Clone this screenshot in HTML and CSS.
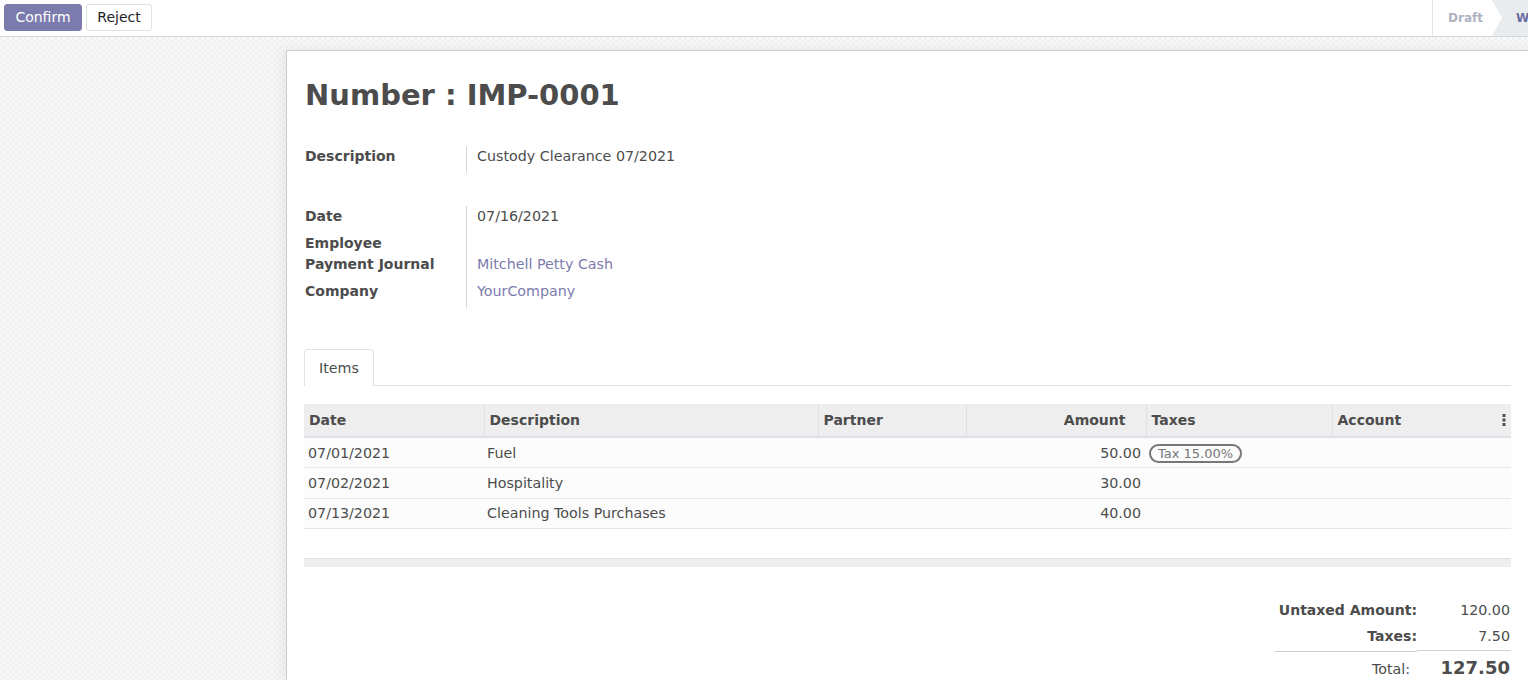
FILE: index.html
```html
<!DOCTYPE html>
<html>
<head>
<meta charset="utf-8">
<link rel="stylesheet" href="styles.css">
</head>
<body>
<div class="cp">
  <div class="cp-buttons">
    <button class="btn btn-primary">Confirm</button>
    <button class="btn btn-secondary">Reject</button>
  </div>
  <div class="statusbar">
    <div class="stage">Draft</div>
    <div class="stage stage-active">Waiting Approval</div>
  </div>
</div>
<div class="content">
  <div class="sheet">
    <h1 class="title">Number : IMP-0001</h1>

    <div class="group">
      <div class="field-row">
        <div class="label">Description</div>
        <div class="value">Custody Clearance 07/2021</div>
      </div>
    </div>

    <div class="group group-2">
      <div class="field-row">
        <div class="label">Date</div>
        <div class="value">07/16/2021</div>
      </div>
      <div class="field-row field-row-empty">
        <div class="label">Employee</div>
        <div class="value"></div>
      </div>
      <div class="field-row">
        <div class="label">Payment Journal</div>
        <div class="value"><a class="link">Mitchell Petty Cash</a></div>
      </div>
      <div class="field-row">
        <div class="label">Company</div>
        <div class="value"><a class="link">YourCompany</a></div>
      </div>
    </div>

    <div class="notebook">
      <div class="tabs">
        <div class="tab">Items</div>
      </div>
      <table class="lines">
        <thead>
          <tr>
            <th class="c-date">Date</th>
            <th class="c-desc">Description</th>
            <th class="c-partner">Partner</th>
            <th class="c-amount num">Amount</th>
            <th class="c-taxes">Taxes</th>
            <th class="c-account">Account
              <svg class="dots" width="4" height="12" viewBox="0 0 4 12"><rect x="0.5" y="0" width="3" height="3" fill="#4c4c4c"/><rect x="0.5" y="4.5" width="3" height="3" fill="#4c4c4c"/><rect x="0.5" y="9" width="3" height="3" fill="#4c4c4c"/></svg>
            </th>
          </tr>
        </thead>
        <tbody>
          <tr>
            <td>07/01/2021</td>
            <td>Fuel</td>
            <td></td>
            <td class="num">50.00</td>
            <td><span class="badge">Tax 15.00%</span></td>
            <td></td>
          </tr>
          <tr>
            <td>07/02/2021</td>
            <td>Hospitality</td>
            <td></td>
            <td class="num">30.00</td>
            <td></td>
            <td></td>
          </tr>
          <tr>
            <td>07/13/2021</td>
            <td>Cleaning Tools Purchases</td>
            <td></td>
            <td class="num">40.00</td>
            <td></td>
            <td></td>
          </tr>
        </tbody>
      </table>
      <div class="table-foot"></div>
    </div>

    <div class="totals-wrap">
      <div class="totals">
        <div class="t-label">Untaxed Amount:</div>
        <div class="t-value">120.00</div>
        <div class="t-label">Taxes:</div>
        <div class="t-value">7.50</div>
        <div class="t-label t-total-label">Total:</div>
        <div class="t-value t-total-value">127.50</div>
      </div>
    </div>
  </div>
</div>
</body>
</html>
```

FILE: styles.css
```css
html, body {
  margin: 0;
  padding: 0;
  height: 100%;
  overflow: hidden;
}
body {
  font-family: "DejaVu Sans", "Liberation Sans", sans-serif;
  font-size: 14.25px;
  color: #4c4c4c;
  background: #fff;
  display: flex;
  flex-direction: column;
}

/* control panel */
.cp {
  height: 36px;
  flex: none;
  border-bottom: 1px solid #d3d6dd;
  display: flex;
  justify-content: space-between;
  background: #fff;
}
.cp-buttons {
  display: flex;
  gap: 4px;
  padding: 4px 0 0 4px;
  align-items: flex-start;
}
.btn {
  font-family: inherit;
  font-size: 14px;
  height: 27px;
  padding: 0 10px;
  border-radius: 3px;
  border: 1px solid transparent;
  line-height: 25px;
  cursor: pointer;
}
.btn-primary {
  background: #7c7bad;
  border-color: #7c7bad;
  color: #fff;
  width: 78px;
}
.btn-secondary {
  background: #fff;
  border-color: #dee2e6;
  color: #212529;
  width: 66px;
}

.statusbar {
  display: flex;
  border-left: 1px solid #e2e4e8;
  height: 36px;
  flex: none;
  width: 95px;
  overflow: hidden;
}
.stage {
  font-size: 12px;
  font-weight: bold;
  line-height: 36px;
  padding: 0 9px 0 15px;
  color: #adb4c0;
  white-space: nowrap;
  flex: none;
}
.stage-active {
  background: #e9ecef;
  color: #6d6ca3;
  position: relative;
  padding-left: 24px;
}
.stage-active::before {
  content: "";
  position: absolute;
  left: 0;
  top: 0;
  border-left: 10px solid #fff;
  border-top: 18px solid transparent;
  border-bottom: 18px solid transparent;
}

/* content area */
.content {
  flex: 1;
  background-color: #f5f5f5;
  background-image: repeating-conic-gradient(#f8f8f8 0 25%, #f1f1f1 0 50%);
  background-size: 6px 6px;
  padding: 13px 0 0 286px;
  display: flex;
  overflow: hidden;
}
.sheet {
  flex: none;
  width: 1244px;
  box-sizing: border-box;
  background: #fff;
  border: 1px solid #cbcad9;
  border-bottom: none;
  box-shadow: -4px 0 12px rgba(0,0,0,0.06);
  padding: 27px 18px 0 18px;
}

.title {
  margin: 0;
  font-size: 29px;
  line-height: 35px;
  font-weight: bold;
  color: #4c4c4c;
}

.group {
  margin-top: 33px;
}
.group-2 {
  margin-top: 33px;
}
.field-row {
  display: grid;
  grid-template-columns: 162px 1fr;
}
.label {
  font-weight: bold;
  font-size: 14px;
  line-height: 21px;
  padding-bottom: 6px;
  border-right: 1px solid #d9d9d9;
}
.field-row-empty .label {
  padding-bottom: 0;
}
.value {
  line-height: 21px;
  padding-left: 10px;
}
.link {
  color: #7c7bad;
  text-decoration: none;
}

/* notebook */
.notebook {
  margin-top: 41px;
  margin-left: -1px;
}
.tabs {
  display: flex;
  border-bottom: 1px solid #dee2e6;
  height: 36px;
}
.tab {
  border: 1px solid #dee2e6;
  border-bottom: none;
  border-radius: 4px 4px 0 0;
  background: #fff;
  padding: 0 14px;
  line-height: 36px;
  height: 37px;
  box-sizing: border-box;
  margin-bottom: -1px;
}

.lines {
  margin-top: 18px;
  width: 100%;
  border-collapse: collapse;
  table-layout: fixed;
}
.lines th {
  background: #eeeeee;
  font-weight: bold;
  font-size: 14px;
  text-align: left;
  height: 33px;
  padding: 0 5px;
  border-left: 1px solid #e0e0e0;
  border-bottom: 2px solid #dde0e6;
  box-sizing: border-box;
  position: relative;
}
.lines th:first-child { border-left: none; }
.lines th.num { text-align: right; padding-right: 20px; }
.c-date { width: 180px; }
.c-desc { width: 334px; }
.c-partner { width: 148px; }
.c-amount { width: 180px; }
.c-taxes { width: 186px; }
.dots {
  position: absolute;
  right: 5px;
  top: 10px;
}
.lines td {
  background: #fcfcfc;
  height: 30.5px;
  padding: 0 4px;
  border-bottom: 1px solid #e3e5e8;
  box-sizing: border-box;
  white-space: nowrap;
}
.lines td:nth-child(2) { padding-left: 3px; }
.lines td.num { text-align: right; padding-right: 5px; }
.badge {
  display: inline-block;
  border: 2px solid #777;
  border-radius: 10px;
  font-size: 13px;
  color: #777;
  line-height: 15px;
  padding: 0 7px 0 7px;
  margin-left: -1px;
  vertical-align: middle;
  position: relative;
  top: 1px;
}
.table-foot {
  margin-top: 29px;
  height: 8px;
  background: #eeeeee;
  border-top: 1px solid #e3e3e3;
}

/* totals */
.totals-wrap {
  display: flex;
  justify-content: flex-end;
  margin-top: 30px;
}
.totals {
  display: grid;
  grid-template-columns: 142px 94px;
  align-items: baseline;
}
.t-label {
  text-align: right;
  font-weight: bold;
  font-size: 14px;
  line-height: 26px;
}
.t-value {
  text-align: right;
  line-height: 26px;
  padding-right: 1px;
}
.t-total-label,
.t-total-value {
  border-top: 1px solid #cfcfcf;
  margin-top: 1px;
  padding-top: 4px;
}
.t-total-label {
  font-weight: normal;
  font-size: 14.25px;
  padding-right: 7px;
}
.t-total-value {
  font-size: 18px;
  font-weight: bold;
}
```
